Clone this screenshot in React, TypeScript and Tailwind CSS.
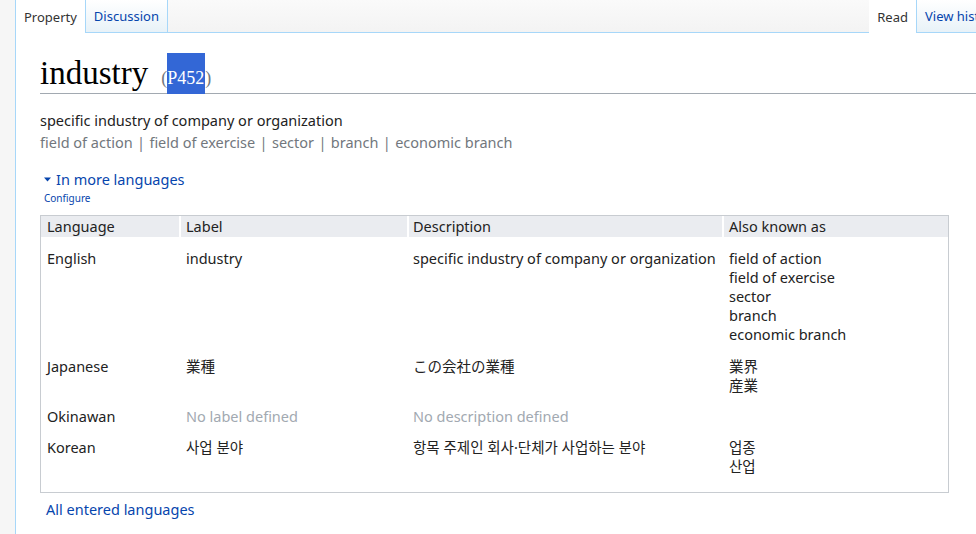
import React from 'react'

const FONT = "font-['Noto_Sans','Noto_Sans_CJK_JP','Noto_Sans_CJK_KR',sans-serif]"

type Row = {
  lang: string
  label?: string
  desc?: string
  aliases: string[]
}

const ROWS: Row[] = [
  {
    lang: 'English',
    label: 'industry',
    desc: 'specific industry of company or organization',
    aliases: ['field of action', 'field of exercise', 'sector', 'branch', 'economic branch'],
  },
  { lang: 'Japanese', label: '業種', desc: 'この会社の業種', aliases: ['業界', '産業'] },
  { lang: 'Okinawan', aliases: [] },
  { lang: 'Korean', label: '사업 분야', desc: '항목 주제인 회사·단체가 사업하는 분야', aliases: ['업종', '산업'] },
]

const ALIASES = ['field of action', 'field of exercise', 'sector', 'branch', 'economic branch']

const COLS = 'grid grid-cols-[138px_226px_313px_224px] gap-x-[2px]'

function Tab({ label, active, link }: { label: string; active?: boolean; link?: boolean }) {
  return (
    <div
      className={
        'flex h-[33px] items-center px-[8px] pt-[2px] text-[13px] whitespace-nowrap ' +
        (active
          ? 'bg-white text-[#333]'
          : 'border-x border-b border-[#a7d7f9] bg-gradient-to-b from-white to-[#e8f2f8]') +
        (link ? ' text-[#0645ad]' : '')
      }
    >
      {label}
    </div>
  )
}

export default function App() {
  return (
    <div className={`flex min-h-[534px] w-[976px] overflow-hidden bg-white text-[#222] ${FONT}`}>
      {/* left rail */}
      <div className="w-[16px] shrink-0 border-r border-[#a7d7f9] bg-[#f6f6f6]" />

      <div className="min-w-0 flex-1">
        {/* tabs, the last one runs past the window edge */}
        <div className="-mr-[32px] flex h-[33px] bg-gradient-to-b from-[#fafafa] to-[#f3f3f3]">
          <Tab label="Property" active />
          <Tab label="Discussion" link />
          <div className="flex-1 border-b border-[#a7d7f9]" />
          <Tab label="Read" active />
          <Tab label="View history" link />
        </div>

        <div className="pl-[24px] pt-[20px]">
          {/* heading */}
          <div className="-mr-[40px] flex h-[41px] items-baseline border-b border-[#a2a9b1] font-['Liberation_Serif',serif] leading-[40px]">
            <span className="text-[33px] text-black">industry</span>
            <span className="ml-[13px] text-[18px] text-[#72777d]">
              (
              <span className="inline-block bg-[#3367d6] pt-[16px] pb-[7px] pr-[1px] leading-[18px] text-white">P452</span>
              )
            </span>
          </div>

          <p className="mt-[15px] text-[14.5px] leading-[22px]">specific industry of company or organization</p>
          <p className="text-[14.5px] leading-[22px] text-[#72777d]">
            {ALIASES.map((a, i) => (
              <React.Fragment key={a}>
                {i > 0 && <span className="mx-[0.6px]"> | </span>}
                {a}
              </React.Fragment>
            ))}
          </p>

          <div className="mt-[15px] flex items-center pl-[4px] text-[14.5px] leading-[22px] text-[#0645ad]">
            <svg width="7" height="5" viewBox="0 0 7 5" className="mr-[5px] mt-[1px]">
              <path d="M0 0.5h7L3.5 4.5z" fill="#0645ad" />
            </svg>
            In more languages
          </div>
          <div className="pl-[4px] pt-[1px] text-[10px] leading-[14px] text-[#0645ad]">Configure</div>

          {/* languages table */}
          <div className="mt-[10px] w-[909px] border border-[#c8ccd1] text-[14.5px] leading-[19px]">
            <div className={`${COLS} leading-[21px]`}>
              <div className="bg-[#eaecf0] pl-[6px]">Language</div>
              <div className="bg-[#eaecf0] pl-[5px]">Label</div>
              <div className="bg-[#eaecf0] pl-[4px]">Description</div>
              <div className="bg-[#eaecf0] pl-[5px]">Also known as</div>
            </div>
            <div className="flex flex-col gap-y-[12px] pt-[12px] pb-[16px]">
              {ROWS.map((r, i) => (
                <div key={r.lang} className={COLS + (i === 0 ? ' mb-[1px]' : '')}>
                  <div className="pl-[6px]">{r.lang}</div>
                  <div className={'pl-[5px] ' + (r.label ? '' : 'text-[#a2a9b1]')}>{r.label ?? 'No label defined'}</div>
                  <div className={'pl-[4px] ' + (r.desc ? '' : 'text-[#a2a9b1]')}>{r.desc ?? 'No description defined'}</div>
                  <div className="flex flex-col pl-[5px]">
                    {r.aliases.map((a) => (
                      <span key={a}>{a}</span>
                    ))}
                  </div>
                </div>
              ))}
            </div>
          </div>

          <div className="mt-[7px] pl-[6px] text-[14.5px] leading-[19px] text-[#0645ad]">All entered languages</div>
        </div>
      </div>
    </div>
  )
}
